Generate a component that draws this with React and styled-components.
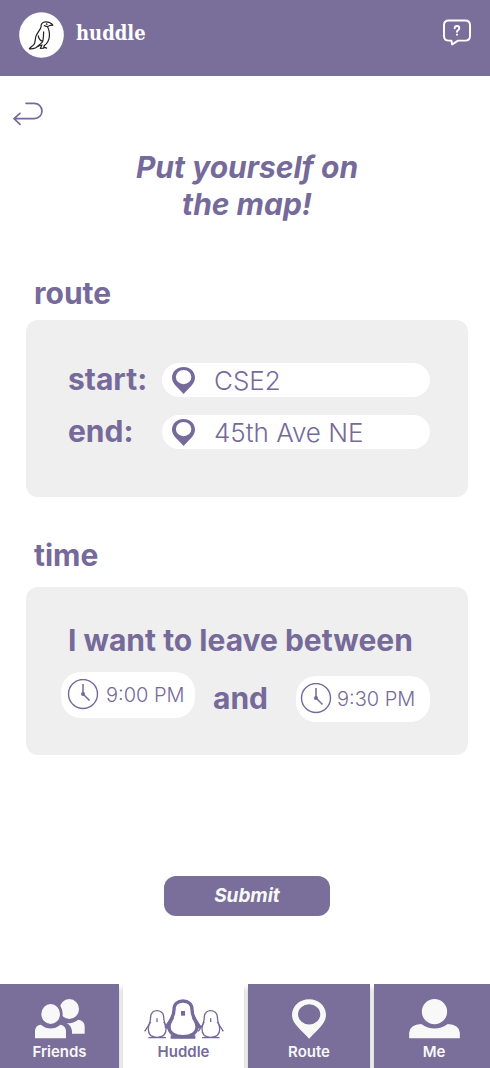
import React from "react";
import styled, { createGlobalStyle } from "styled-components";

const purple = "#7a6e9a";
const ink = "#766a9a";
const panel = "#efefef";

const GlobalStyle = createGlobalStyle`
  *, *::before, *::after { box-sizing: border-box; }
  body {
    margin: 0;
    background: #fff;
    color: ${ink};
    font-family: Inter, "Liberation Sans", sans-serif;
  }
`;

const Page = styled.div`
  display: flex;
  flex-direction: column;
  min-height: 100vh;
`;

const Header = styled.header`
  display: flex;
  justify-content: space-between;
  align-items: flex-start;
  height: 76px;
  padding: 12px 19px 0 19px;
  background: ${purple};
`;

const Brand = styled.a`
  display: flex;
  gap: 12px;
  color: #fff;
  text-decoration: none;
`;

const BrandName = styled.span`
  font: bold 20px/42px "DejaVu Serif Condensed", "DejaVu Serif", serif;
`;

const Avatar = styled.svg`
  width: 45px;
  height: 46px;
`;

const IconButton = styled.button`
  display: flex;
  padding: 0;
  border: 0;
  background: none;
  color: inherit;
  cursor: pointer;
`;

const HelpButton = styled(IconButton)`
  margin-top: 7px;
  color: #fff;
`;

const Main = styled.main`
  display: flex;
  flex-direction: column;
  flex: 1;
  padding: 26px 22px 68px 26px;
`;

const BackButton = styled(IconButton)`
  align-self: flex-start;
  margin-left: -13px;
`;

const Title = styled.h1`
  width: 260px;
  margin: 23px auto 0;
  font-size: 30px;
  line-height: 37px;
  font-weight: 700;
  font-style: italic;
  text-align: center;
`;

const SectionTitle = styled.h2`
  margin: 0 0 0 8px;
  font-size: 30px;
  line-height: 36px;
  font-weight: 700;
`;

const RouteSection = styled.section`
  margin-top: 52px;
`;

const TimeSection = styled.section`
  margin-top: 40px;
`;

const RouteCard = styled.div`
  display: grid;
  grid-template-columns: 80px minmax(0, 1fr);
  gap: 18px 14px;
  align-items: center;
  margin-top: 9px;
  padding: 43px 38px 48px 42px;
  border-radius: 12px;
  background: ${panel};
`;

const TimeCard = styled.div`
  margin-top: 14px;
  padding: 35px 38px 33px 35px;
  border-radius: 12px;
  background: ${panel};
`;

const FieldLabel = styled.label`
  font-size: 30px;
  line-height: 32px;
  padding-bottom: 2px;
  font-weight: 700;
`;

const Pill = styled.div`
  display: flex;
  align-items: center;
  background: #fff;
`;

const PlacePill = styled(Pill)`
  gap: 19px;
  height: 34px;
  padding: 2px 10px 0;
  border-radius: 17px;

  svg {
    margin-bottom: 2px;
  }
`;

const TimePill = styled(Pill)`
  align-self: ${(p) => p.$align};
  gap: ${(p) => p.$gap}px;
  width: 134px;
  height: 46px;
  padding: 0 ${(p) => p.$inset}px;
  border-radius: 20px;
`;

const TextInput = styled.input`
  flex: 1;
  min-width: 0;
  padding: 0;
  border: 0;
  outline: 0;
  background: none;
  color: inherit;
  font: 300 ${(p) => p.$size}px/30px Inter, "Liberation Sans", sans-serif;
`;

const Sentence = styled.p`
  margin: 0 0 14px 7px;
  font-size: 30px;
  line-height: 36px;
  font-weight: 700;
`;

const TimeRow = styled.div`
  display: flex;
  justify-content: space-between;
  align-items: center;
  height: 50px;
`;

const Joiner = styled.span`
  padding: 2px 10px 0 0;
  font-size: 30px;
  line-height: 36px;
  font-weight: 700;
`;

const SubmitButton = styled.button`
  align-self: center;
  width: 166px;
  height: 40px;
  margin-top: auto;
  padding: 0;
  border: 0;
  border-radius: 12px;
  background: ${purple};
  color: #f8f8f8;
  font: italic 700 19px/24px Inter, "Liberation Sans", sans-serif;
  cursor: pointer;
`;

const TabBar = styled.nav`
  display: grid;
  grid-template-columns: 119fr 121fr 122fr 116fr;
  gap: 4px;
  overflow-x: clip;
`;

const Tab = styled.a`
  display: flex;
  flex-direction: column;
  align-items: center;
  gap: 4px;
  height: 84px;
  padding: 15px 0 0 ${(p) => p.$shift || 0}px;
  background: ${(p) => (p.$active ? "#fff" : purple)};
  color: ${(p) => (p.$active ? ink : "#f8f8f8")};
  box-shadow: 0 4px 4px rgba(0, 0, 0, 0.25);
  font-size: 15px;
  line-height: 18px;
  font-weight: 600;
  text-decoration: none;
`;

function PenguinLogo() {
  return (
    <Avatar viewBox="57 37 135 137" aria-hidden="true">
      <ellipse cx="124.500" cy="105.500" rx="67" ry="68" fill="#fff" />
      <g fill="none" stroke="#222" strokeWidth="3.600" strokeLinecap="round" strokeLinejoin="round">
        <path d="M158 76C154 69 146 66 137 66C127 66 122 73 123 82C119 92 112 98 108 109C104 120 108 129 100 136C96 140 91 142 88 147C100 148 111 143 117 136L127 127" />
        <path d="M158 76C152 75 149 78 142 80C138 80 135 78 133 77M142 80C147 88 149 99 148 110C147 123 142 131 133 137" />
        <path d="M131 96C130 108 131 116 128 125C120 122 116 116 115 108" />
        <path d="M112 140L122 136M126 135L121 146L131 145M133 137L131 142L140 145" />
        <circle cx="140" cy="73" r="0.800" />
      </g>
    </Avatar>
  );
}

function HelpIcon() {
  return (
    <svg width="28" height="27" viewBox="38 57 86 82" fill="none" stroke="currentColor" strokeWidth="6" strokeLinecap="round" strokeLinejoin="round" aria-hidden="true">
      <path d="M56 61H106Q121 61 121 76V108Q121 123 106 123H84L66 135L64 123H56Q41 123 41 108V76Q41 61 56 61Z" />
      <path d="M74 85Q74 78 81 78Q88 78 88 84Q88 88 84 91Q81 93 81 96M81 104V105" />
    </svg>
  );
}

function BackIcon() {
  return (
    <svg width="30" height="24" viewBox="39 306 90 72" fill="none" stroke="currentColor" strokeWidth="5" strokeLinecap="round" strokeLinejoin="round" aria-hidden="true">
      <path d="M78 310H103A23 23 0 0 1 103 356H43M60 340L42 356L60 373" />
    </svg>
  );
}

const pinOutline = "M51 0C79 0 101 20 101 47C101 75 71 94 51 118C31 94 0 75 0 47C0 20 23 0 51 0Z";

function FieldPinIcon() {
  return (
    <svg width="23" height="27" viewBox="0 0 101 118" fill="currentColor" fillRule="evenodd" aria-hidden="true">
      <path d={pinOutline + "M51 13A34 31 0 1 0 51 75A34 31 0 1 0 51 13Z"} />
    </svg>
  );
}

function TabPinIcon() {
  return (
    <svg width="34" height="40" viewBox="0 0 101 118" fill="currentColor" fillRule="evenodd" aria-hidden="true">
      <path d={pinOutline + "M51 15A33 30 0 1 0 51 75A33 30 0 1 0 51 15Z"} />
    </svg>
  );
}

function ClockIcon() {
  return (
    <svg width="32" height="32" viewBox="0 0 32 32" fill="none" stroke="currentColor" aria-hidden="true">
      <circle cx="16" cy="15" r="14.500" strokeWidth="1.400" />
      <path d="M16 5V15L22.500 21.500" strokeWidth="1.500" />
      <circle cx="16" cy="15" r="2" fill="currentColor" stroke="none" />
    </svg>
  );
}

function FriendsIcon() {
  return (
    <svg width="50" height="40" viewBox="102 72 150 120" fill="currentColor" aria-hidden="true">
      <ellipse cx="205" cy="102" rx="29" ry="30" />
      <ellipse cx="149" cy="117" rx="36" ry="39" fill={purple} />
      <ellipse cx="149" cy="117" rx="28" ry="30" />
      <path d="M102 190V169Q103 150 120 149Q149 172 178 149Q195 152 195 169V190Z" />
      <path d="M213 176V168Q211 152 197 145Q219 145 232 134Q251 137 251 154V176Z" />
    </svg>
  );
}

function MeIcon() {
  return (
    <svg width="51" height="40" viewBox="505 72 152 120" fill="currentColor" aria-hidden="true">
      <circle cx="581" cy="110" r="38" />
      <path d="M505 190V173Q507 149 541 147Q581 174 621 147Q655 149 657 173V190Z" />
    </svg>
  );
}

function HuddleIcon() {
  return (
    <svg width="80" height="40" viewBox="430 71 240 120" fill="none" stroke="currentColor" aria-hidden="true">
      <g strokeWidth="4">
        <path d="M469 106C459 106 450 113 450 124C450 141 443 148 443 162C443 176 451 186 469 186C487 186 496 176 496 162C496 148 489 141 489 124C489 113 479 106 469 106Z" />
        <path d="M450 140L432 168M489 140L507 168M443 187H496M469 129V140" />
        <path d="M630 106C620 106 611 113 611 124C611 141 604 148 604 162C604 176 612 186 630 186C648 186 657 176 657 162C657 148 650 141 650 124C650 113 640 106 630 106Z" />
        <path d="M611 140L593 168M650 140L668 168M604 187H657M630 129V140" />
      </g>
      <g strokeWidth="10">
        <path d="M547 77C531 77 520 87 520 103C520 126 505 136 505 154C505 173 523 184 547 184C571 184 589 173 589 154C589 136 574 126 574 103C574 87 563 77 547 77Z" />
        <path d="M516 126L495 158M578 126L599 158M510 185H584" />
      </g>
      <rect x="541" y="107" width="12" height="14" fill="currentColor" stroke="none" />
    </svg>
  );
}

export default function App() {
  return (
    <Page>
      <GlobalStyle />
      <Header>
        <Brand href="#home">
          <PenguinLogo />
          <BrandName>huddle</BrandName>
        </Brand>
        <HelpButton type="button" aria-label="Help">
          <HelpIcon />
        </HelpButton>
      </Header>
      <Main>
        <BackButton type="button" aria-label="Back">
          <BackIcon />
        </BackButton>
        <Title>Put yourself on the map!</Title>
        <RouteSection>
          <SectionTitle>route</SectionTitle>
          <RouteCard>
            <FieldLabel htmlFor="start">start:</FieldLabel>
            <PlacePill>
              <FieldPinIcon />
              <TextInput id="start" $size={26} defaultValue="CSE2" />
            </PlacePill>
            <FieldLabel htmlFor="end">end:</FieldLabel>
            <PlacePill>
              <FieldPinIcon />
              <TextInput id="end" $size={26} defaultValue="45th Ave NE" />
            </PlacePill>
          </RouteCard>
        </RouteSection>
        <TimeSection>
          <SectionTitle>time</SectionTitle>
          <TimeCard>
            <Sentence>I want to leave between</Sentence>
            <TimeRow>
              <TimePill $align="flex-start" $inset={6} $gap={7}>
                <ClockIcon />
                <TextInput aria-label="Earliest time" $size={20} defaultValue="9:00 PM" />
              </TimePill>
              <Joiner>and</Joiner>
              <TimePill $align="flex-end" $inset={4} $gap={5}>
                <ClockIcon />
                <TextInput aria-label="Latest time" $size={20} defaultValue="9:30 PM" />
              </TimePill>
            </TimeRow>
          </TimeCard>
        </TimeSection>
        <SubmitButton type="button">Submit</SubmitButton>
      </Main>
      <TabBar>
        <Tab href="#friends">
          <FriendsIcon />
          Friends
        </Tab>
        <Tab href="#huddle" $active aria-current="page">
          <HuddleIcon />
          Huddle
        </Tab>
        <Tab href="#route">
          <TabPinIcon />
          Route
        </Tab>
        <Tab href="#me" $shift={4}>
          <MeIcon />
          Me
        </Tab>
      </TabBar>
    </Page>
  );
}
